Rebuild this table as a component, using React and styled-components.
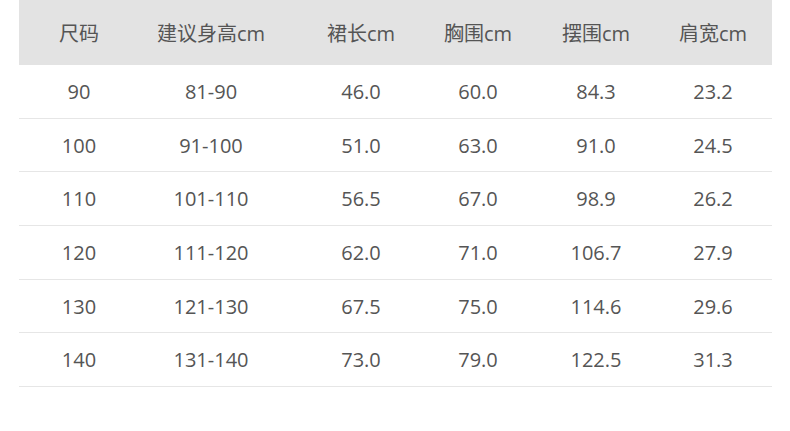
import React from "react";
import styled, { createGlobalStyle } from "styled-components";

const GlobalStyle = createGlobalStyle`
  body {
    margin: 0;
    background: #ffffff;
    font-family: "Open Sans", "Noto Sans CJK SC", sans-serif;
  }
`;

const headers = ["尺码", "建议身高cm", "裙长cm", "胸围cm", "摆围cm", "肩宽cm"];

const rows = [
  ["90", "81-90", "46.0", "60.0", "84.3", "23.2"],
  ["100", "91-100", "51.0", "63.0", "91.0", "24.5"],
  ["110", "101-110", "56.5", "67.0", "98.9", "26.2"],
  ["120", "111-120", "62.0", "71.0", "106.7", "27.9"],
  ["130", "121-130", "67.5", "75.0", "114.6", "29.6"],
  ["140", "131-140", "73.0", "79.0", "122.5", "31.3"],
];

const App = () => {
  return (
    <>
      <GlobalStyle />
      <Page>
        <Table>
          <Row header>
            {headers.map((h) => (
              <Cell key={h}>{h}</Cell>
            ))}
          </Row>
          {rows.map((r) => (
            <Row key={r[0]}>
              {r.map((v, i) => (
                <Cell key={i}>{v}</Cell>
              ))}
            </Row>
          ))}
        </Table>
      </Page>
    </>
  );
};

const Page = styled.div`
  width: 790px;
  height: 431px;
  padding-left: 19px;
  box-sizing: border-box;
`;

const Table = styled.div`
  width: 753px;
  display: flex;
  flex-direction: column;
`;

const Row = styled.div`
  display: grid;
  grid-template-columns: 120px 144px 156px 78px 158px 76px;
  padding-right: 21px;
  align-items: center;
  height: ${(p) => (p.header ? "65px" : "53.7px")};
  background: ${(p) => (p.header ? "#e3e3e3" : "transparent")};
  border-bottom: ${(p) => (p.header ? "none" : "1px solid #e6e6e6")};
  box-sizing: border-box;
  color: #555555;
  font-size: 20px;
`;

const Cell = styled.div`
  text-align: center;
  white-space: nowrap;
`;

export default App;
